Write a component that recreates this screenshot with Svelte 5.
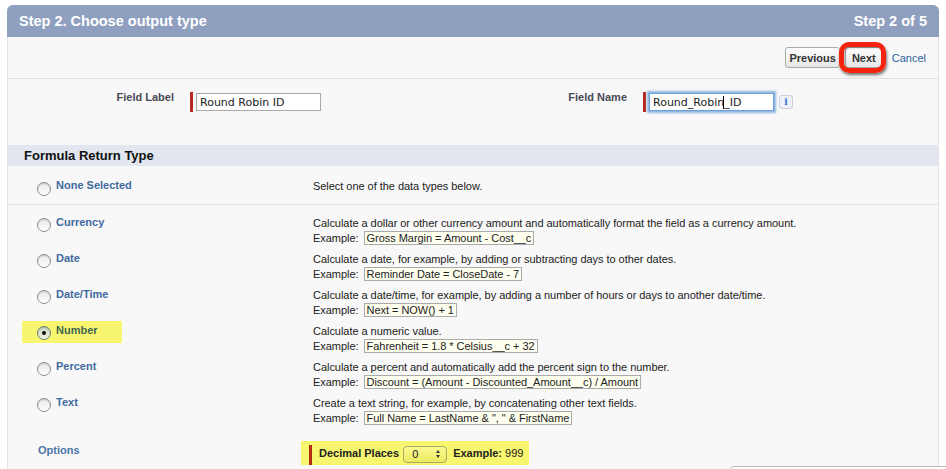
<script>
  const types = [
    { name: 'Currency', text: 'Calculate a dollar or other currency amount and automatically format the field as a currency amount.', example: 'Gross Margin = Amount - Cost__c' },
    { name: 'Date', text: 'Calculate a date, for example, by adding or subtracting days to other dates.', example: 'Reminder Date = CloseDate - 7' },
    { name: 'Date/Time', text: 'Calculate a date/time, for example, by adding a number of hours or days to another date/time.', example: 'Next = NOW() + 1' },
    { name: 'Number', text: 'Calculate a numeric value.', example: 'Fahrenheit = 1.8 * Celsius__c + 32', selected: true },
    { name: 'Percent', text: 'Calculate a percent and automatically add the percent sign to the number.', example: 'Discount = (Amount - Discounted_Amount__c) / Amount' },
    { name: 'Text', text: 'Create a text string, for example, by concatenating other text fields.', example: 'Full Name = LastName & ", " & FirstName' }
  ];
</script>

<main class="panel">
  <header class="step">
    <h2>Step 2. Choose output type</h2>
    <span>Step 2 of 5</span>
  </header>

  <div class="buttons">
    <div class="btn-group">
      <button class="btn prev">Previous</button>
      <button class="btn next">Next</button>
      <span class="callout"></span>
    </div>
    <a href="#cancel" class="cancel">Cancel</a>
  </div>

  <div class="fields">
    <label class="field-label" for="field-label">Field Label</label>
    <div class="required"><input id="field-label" class="text-input" value="Round Robin ID" /></div>
    <label class="field-label" for="field-name">Field Name</label>
    <div class="required">
      <span class="focus-wrap">
        <input id="field-name" class="text-input focused" value="Round_Robin_ID" />
        <span class="caret"></span>
      </span>
      <span class="info">i</span>
    </div>
  </div>

  <h3 class="section">Formula Return Type</h3>

  <div class="row none">
    <div class="choice"><span class="radio"></span><span class="name">None Selected</span></div>
    <div class="desc">Select one of the data types below.</div>
  </div>

  <div class="list">
    {#each types as t}
      <div class="row">
        <div class="choice" class:selected={t.selected}>
          <span class="radio" class:on={t.selected}></span>
          <span class="name">{t.name}</span>
        </div>
        <div class="desc">
          <div>{t.text}</div>
          <div class="example-line">Example: <span class="example">{t.example}</span></div>
        </div>
      </div>
    {/each}
  </div>

  <div class="row options">
    <div class="opt-name">Options</div>
    <div class="decimal">
      <span class="dec-label">Decimal Places</span>
      <span class="select">0<span class="arrows"><i></i><i></i></span></span>
      <span class="dec-label">Example:</span> 999
    </div>
  </div>
</main>

<div class="corner"></div>

<style>
  :global(html), :global(body) {
    height: 100%;
    overflow: hidden;
    background: #fff;
  }

  .panel {
    margin: 5px 7px 0 7px;
    width: 932px;
    height: 470px;
    box-sizing: border-box;
    background: #f8f8f8;
    border-left: 1px solid #e4e4e4;
    border-right: 1px solid #e4e4e4;
    border-radius: 6px 6px 0 0;
    font-family: "Liberation Sans", Arial, sans-serif;
    font-size: 11px;
    color: #222;
  }

  .step {
    display: flex;
    justify-content: space-between;
    align-items: center;
    height: 32px;
    margin: 0 -1px;
    padding: 0 12px;
    background: #8f9fbf;
    border-radius: 6px 6px 0 0;
    color: #fff;
    font-size: 14.5px;
    font-weight: bold;
  }

  .step h2 {
    margin: 0;
    font-size: 14.5px;
  }

  .buttons {
    display: flex;
    justify-content: flex-end;
    align-items: center;
    height: 41px;
    padding-right: 12px;
    border-bottom: 1px solid #e0e0e0;
  }

  .btn-group {
    position: relative;
    display: flex;
    gap: 5px;
    margin-right: 9px;
  }

  .btn {
    height: 21px;
    padding: 0 6px;
    font: bold 11px "Liberation Sans", Arial, sans-serif;
    color: #333;
    background: linear-gradient(#fdfdfd, #e6e6e6);
    border: 1px solid #a9a9a9;
    border-radius: 3px;
  }

  .prev {
    padding: 0 3px;
  }

  .callout {
    position: absolute;
    right: -3px;
    top: -5px;
    width: 47px;
    height: 31px;
    box-sizing: border-box;
    border: 5px solid #f5220c;
    border-radius: 10px;
    box-shadow: 1px 2px 3px rgba(0, 0, 0, 0.55), inset 1px 1px 2px rgba(0, 0, 0, 0.3);
  }

  .cancel {
    color: #2b5f9e;
    text-decoration: none;
    font-size: 11px;
  }

  .fields {
    display: grid;
    grid-template-columns: 166px 269px 184px auto;
    align-items: start;
    height: 66px;
    padding-top: 13px;
    box-sizing: border-box;
  }

  .field-label {
    font-weight: bold;
    color: #4a4a56;
    text-align: right;
    margin-top: -2px;
    line-height: 14px;
  }

  .required {
    display: flex;
    align-items: center;
    gap: 5px;
    margin-left: 16px;
    padding-left: 3px;
    border-left: 3px solid #b52b23;
    height: 20px;
  }

  .text-input {
    width: 125px;
    height: 18px;
    box-sizing: border-box;
    padding: 0 3px;
    border: 1px solid #aaa;
    background: #fff;
    font: 11px "DejaVu Sans", sans-serif;
    color: #222;
    outline: none;
  }

  .focus-wrap {
    position: relative;
    display: flex;
  }

  .focused {
    border-color: #6f9fd8;
    box-shadow: 0 0 2px 2px #8db6e2;
  }

  .caret {
    position: absolute;
    left: 74px;
    top: 3px;
    width: 1px;
    height: 13px;
    background: #000;
  }

  .info {
    width: 14px;
    height: 14px;
    box-sizing: border-box;
    text-align: center;
    border: 1px solid #ccd;
    border-radius: 3px;
    background: #eef2f8;
    color: #2a6fd0;
    font: bold 9px/13px "DejaVu Serif", serif;
  }

  .section {
    margin: 0;
    height: 21px;
    line-height: 21px;
    padding-left: 16px;
    background: #e2e6ef;
    color: #111;
    font-size: 13px;
    font-weight: bold;
  }

  .row {
    display: grid;
    grid-template-columns: 305px 1fr;
    height: 36px;
  }

  .none {
    height: 39px;
    padding-top: 13px;
    box-sizing: border-box;
    border-bottom: 1px solid #e0e0e0;
  }

  .none .radio {
    margin-top: 3px;
  }

  .list {
    padding-top: 11px;
  }

  .choice {
    display: flex;
    align-items: flex-start;
    gap: 5px;
    padding-left: 29px;
    height: 22px;
  }

  .choice.selected {
    width: 100px;
    box-sizing: border-box;
    margin-left: 14px;
    margin-top: -3px;
    padding: 5px 0 0 15px;
    background: #f8f66f;
  }

  .radio {
    position: relative;
    width: 14px;
    height: 14px;
    margin-top: 2px;
    box-sizing: border-box;
    border: 1px solid #8f8f8f;
    border-radius: 50%;
    background: linear-gradient(#e8e8e8, #fdfdfd);
    box-shadow: inset 0 1px 1px rgba(0, 0, 0, 0.15);
  }

  .radio.on {
    margin-top: 0;
    background: linear-gradient(#c9d8c0, #eef3e0);
    border-color: #6a7d6a;
  }

  .radio.on::after {
    content: "";
    position: absolute;
    left: 4px;
    top: 4px;
    width: 4px;
    height: 4px;
    border-radius: 50%;
    background: #111;
  }

  .name {
    font-weight: bold;
    color: #3f6a9f;
    line-height: 14px;
    margin-top: -1px;
  }

  .selected .name {
    color: #3f6650;
    margin-top: -3px;
  }

  .desc {
    line-height: 15px;
    color: #222;
    letter-spacing: -0.04px;
  }

  .example-line {
    white-space: nowrap;
  }

  .example {
    display: inline-block;
    margin-left: 2px;
    padding: 0 2px;
    line-height: 12px;
    border: 1px solid #aaa;
    background: #fffff0;
  }

  .options {
    margin-top: 9px;
    height: 24px;
  }

  .opt-name {
    padding: 2px 0 0 30px;
    font-weight: bold;
    color: #4a76a8;
    line-height: 14px;
  }

  .decimal {
    display: flex;
    align-items: center;
    align-self: start;
    width: 228px;
    height: 24px;
    margin-left: -12px;
    padding-left: 8px;
    box-sizing: border-box;
    background: #f8f66f;
    color: #222;
    white-space: pre;
  }

  .decimal::before {
    content: "";
    width: 3px;
    height: 20px;
    margin: 4px 7px 0 0;
    background: #b52b10;
  }

  .dec-label {
    font-weight: bold;
  }

  .select {
    display: flex;
    align-items: center;
    justify-content: space-between;
    width: 44px;
    height: 17px;
    margin: 2px 6px 0 4px;
    padding: 0 6px 0 8px;
    box-sizing: border-box;
    border: 1px solid #a8a86a;
    border-radius: 4px;
    background: linear-gradient(#fbfa90, #ecea60);
  }

  .arrows {
    display: flex;
    flex-direction: column;
    gap: 2px;
  }

  .arrows i {
    width: 0;
    height: 0;
    border-left: 2px solid transparent;
    border-right: 2px solid transparent;
    border-bottom: 3px solid #333;
  }

  .arrows i + i {
    border-bottom: 0;
    border-top: 3px solid #333;
  }

  .corner {
    position: fixed;
    left: 730px;
    top: 466px;
    width: 230px;
    height: 20px;
    background: #fff;
    border: 1px solid #bbb;
    border-radius: 4px 0 0 0;
  }
</style>
